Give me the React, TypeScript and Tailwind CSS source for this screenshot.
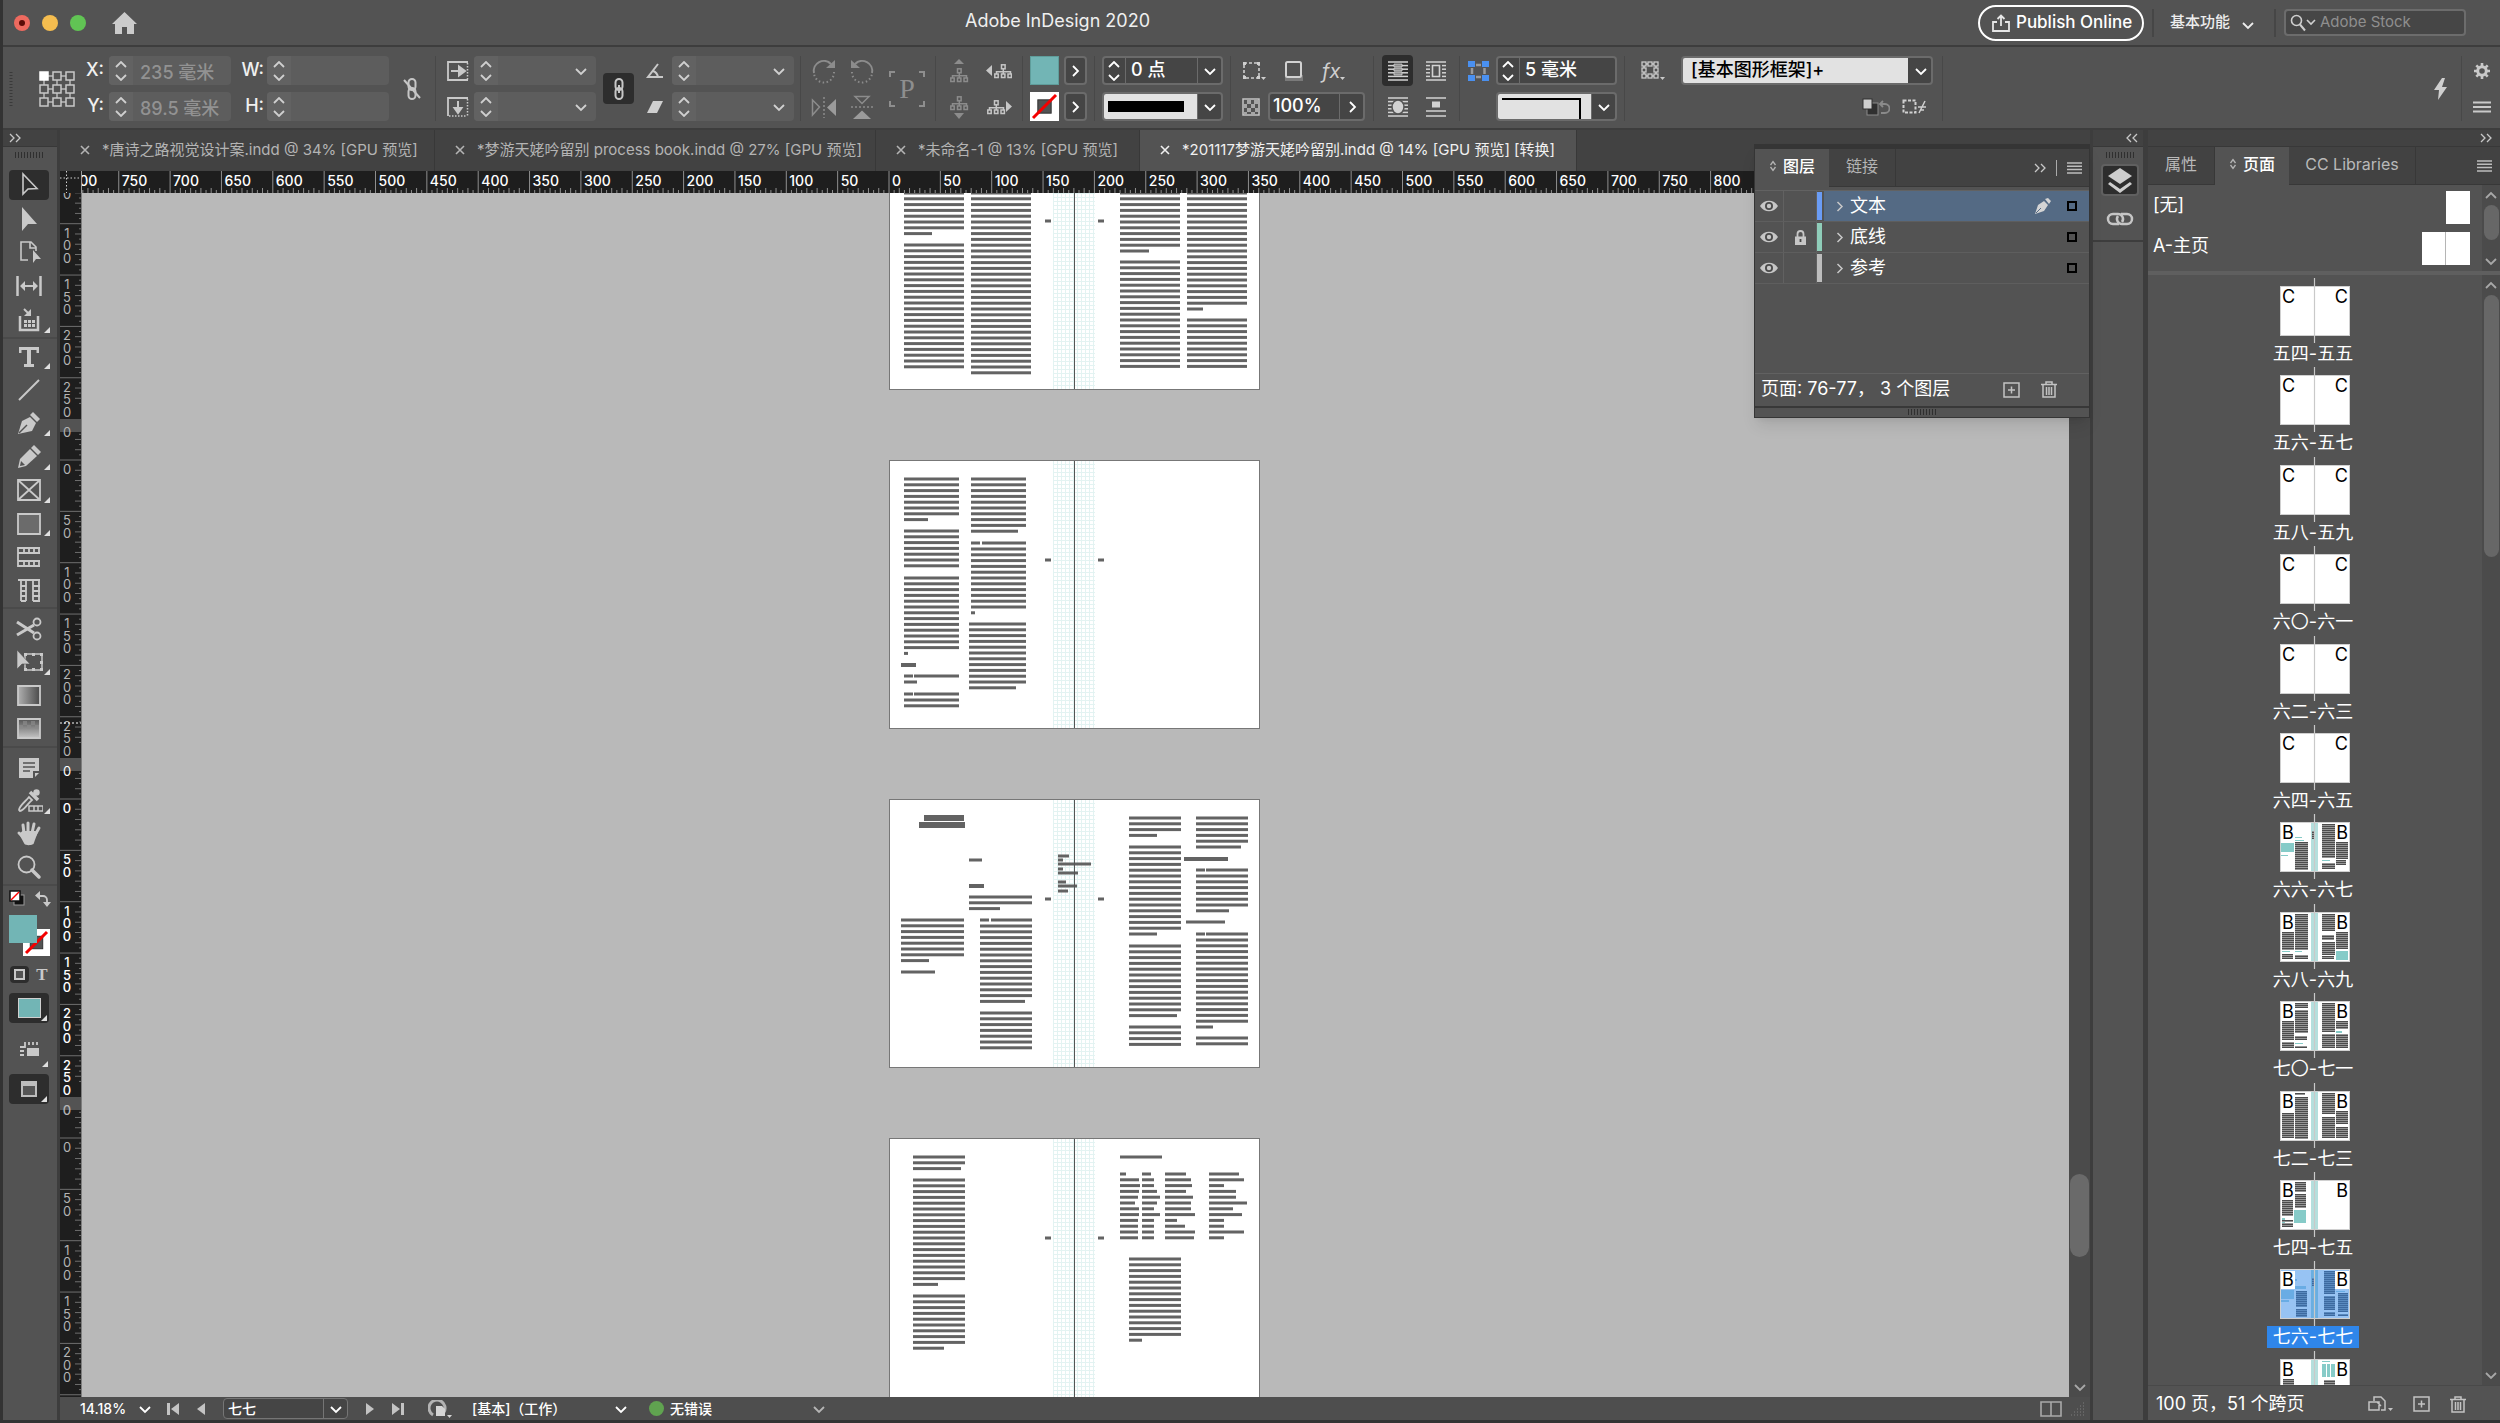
import React from "react";

type Kids = { children?: React.ReactNode };

/* ---------- small shared pieces ---------- */

function Svg({ w, h, className = "", children }: Kids & { w: number; h: number; className?: string }) {
  return (
    <svg width={w} height={h} viewBox={`0 0 ${w} ${h}`} fill="none" className={`shrink-0 ${className}`} aria-hidden="true">
      {children}
    </svg>
  );
}

function Chevron({ dir = "down", className = "" }: { dir?: "down" | "right" | "up"; className?: string }) {
  const d = dir === "down" ? "M1 4l5 5 5-5" : dir === "up" ? "M1 9l5-5 5 5" : "M4 1l5 5-5 5";
  return (
    <Svg w={12} h={12} className={className}>
      <path d={d} stroke="currentColor" strokeWidth="1.8" />
    </Svg>
  );
}

function Double({ dir }: { dir: "left" | "right" }) {
  return (
    <Svg w={12} h={10}>
      <path d={dir === "right" ? "M1 1l4 4-4 4M7 1l4 4-4 4" : "M5 1L1 5l4 4M11 1L7 5l4 4"} stroke="#c8c8c8" strokeWidth="1.3" />
    </Svg>
  );
}

function Grip() {
  return (
    <div className="flex justify-center gap-0.5">
      {Array.from({ length: 10 }, (_, i) => (
        <span key={i} className="h-1.5 w-px bg-[#2f2f2f]" />
      ))}
    </div>
  );
}

function Menu() {
  return (
    <Svg w={15} h={12}>
      <path d="M0 1h15M0 4.3h15M0 7.6h15M0 11h15" stroke="#bdbdbd" strokeWidth="1.5" />
    </Svg>
  );
}

function Stepper({ label, lit = false }: { label: string; lit?: boolean }) {
  return (
    <button aria-label={`${label} 增减`} className={lit ? "flex h-full w-[22px] shrink-0 items-center justify-center border-r border-[#6b6b6b] pr-0.5 text-white" : "flex h-full w-6 shrink-0 items-center justify-center rounded-l bg-[#626262] text-[#cfcfcf]"}>
      <Svg w={12} h={20}>
        <path d="M1 6l5-5 5 5M1 14l5 5 5-5" stroke="currentColor" strokeWidth="1.8" />
      </Svg>
    </button>
  );
}

function Field({ id, label, value = "", drop = false }: { id: string; label: string; value?: string; drop?: boolean }) {
  return (
    <div className="flex h-[29px] w-[122px] items-center rounded bg-[#5d5d5d]">
      <Stepper label={label} />
      <input id={id} aria-label={label} defaultValue={value} className="h-full min-w-0 flex-1 bg-transparent pl-[7px] text-[18px] text-[#929292] outline-none" />
      {drop && (
        <button aria-label={`${label} 选项`} className="flex w-[30px] justify-center text-[#d0d0d0]">
          <Chevron />
        </button>
      )}
    </div>
  );
}

function Divider() {
  return <div className="h-[65px] w-px shrink-0 bg-[#484848]" />;
}

function Rows({ className = "", children }: Kids & { className?: string }) {
  return <div className={`grid shrink-0 grid-rows-[29px_29px] items-center gap-y-[7px] ${className}`}>{children}</div>;
}

function IconButton({ label, className = "", children }: Kids & { label: string; className?: string }) {
  return (
    <button aria-label={label} className={`flex items-center justify-center ${className}`}>
      {children}
    </button>
  );
}

/* ---------- title bar ---------- */

function TitleBar() {
  return (
    <header className="flex h-[47px] shrink-0 items-center justify-between border-b-2 border-[#3d3d3d]">
      <div className="flex items-center">
        <span className="ml-[11px] flex size-4 items-center justify-center rounded-full bg-[#ee6a5f]">
          <span className="size-1.5 rounded-full bg-[#5c0d08]" />
        </span>
        <span className="ml-3 size-4 rounded-full bg-[#f5bd4f]" />
        <span className="ml-3 size-4 rounded-full bg-[#61c454]" />
        <IconButton label="主页" className="ml-[26px]">
          <Svg w={25} h={22}>
            <path d="M12.5 0L25 12h-3v10h-7v-7h-5v7H3V12H0z" fill="#cbcbcb" />
          </Svg>
        </IconButton>
      </div>
      <h1 className="pb-0.5 text-[18px] text-[#efefef]">Adobe InDesign 2020</h1>
      <div className="flex items-center justify-end pr-[34px]">
        <button className="flex h-9 w-[166px] items-center gap-1.5 rounded-full border-2 border-white pl-3 text-[17px] font-medium whitespace-nowrap text-white">
          <Svg w={18} h={18}>
            <path d="M5 8H1v9h16V8h-4M9 12V2M5.500 5L9 1.500 12.500 5" stroke="#e6e6e6" strokeWidth="1.8" />
          </Svg>
          Publish Online
        </button>
        <span className="ml-2 h-7 w-0.5 bg-[#464646]" />
        <button className="ml-4 flex items-center gap-3 text-[15px] font-medium text-[#ededed]">
          基本功能
          <Chevron className="mt-1" />
        </button>
        <span className="ml-5 h-7 w-0.5 bg-[#464646]" />
        <label className="ml-2 flex h-[27px] w-[182px] items-center rounded border-2 border-[#6c6c6c] bg-[#464646] pl-1">
          <Svg w={26} h={18}>
            <circle cx="6.500" cy="6.500" r="5" stroke="#cfcfcf" strokeWidth="1.6" />
            <path d="M10 10.500l5 6" stroke="#cfcfcf" strokeWidth="2" />
            <path d="M17 6l4 4 4-4" stroke="#cfcfcf" strokeWidth="1.6" />
          </Svg>
          <input aria-label="Adobe Stock" placeholder="Adobe Stock" className="ml-1 w-full min-w-0 bg-transparent text-[15px] outline-none placeholder:text-[#8f8f8f]" />
        </label>
      </div>
    </header>
  );
}

/* ---------- control bar ---------- */

function Rotate({ ccw = false }: { ccw?: boolean }) {
  return (
    <Svg w={26} h={26} className={ccw ? "-scale-x-100" : ""}>
      <path d="M3 15a10 10 0 0 1 17-9" stroke="#8c8c8c" strokeWidth="2" />
      <path d="M24 2v8h-9z" fill="#8c8c8c" />
      <path d="M23 14a10 10 0 0 1-20 1" stroke="#8c8c8c" strokeWidth="2" strokeDasharray="1.500 2.500" />
    </Svg>
  );
}

function Tree({ color }: { color: string }) {
  return (
    <g stroke={color} strokeWidth="1.5">
      <rect x="7.500" y=".8" width="3.600" height="4" />
      <path d="M9.300 5v5M2.500 10V7.700h14V10" />
      <rect x=".8" y="10" width="3.400" height="3.500" />
      <rect x="7.500" y="10" width="3.400" height="3.500" />
      <rect x="14" y="10" width="3.400" height="3.500" />
    </g>
  );
}

function Link({ broken = false }: { broken?: boolean }) {
  return (
    <Svg w={20} h={24}>
      <rect x="6.500" y="2" width="7" height="11" rx="3.500" stroke="#c6c6c6" strokeWidth="2" />
      <rect x="6.500" y="11" width="7" height="11" rx="3.500" stroke="#c6c6c6" strokeWidth="2" />
      {broken ? <path d="M2 3l16 18" stroke="#c6c6c6" strokeWidth="2" /> : <path d="M10 8v8" stroke="#c6c6c6" strokeWidth="2" />}
    </Svg>
  );
}

function NoneSwatch({ size }: { size: number }) {
  return (
    <Svg w={size} h={size}>
      <path d={`M0 0h${size}v${size}h-${size}z`} fill="#fff" />
      <rect x={size * 0.27} y={size * 0.27} width={size * 0.46} height={size * 0.46} fill="#535353" stroke="#333" />
      <path d={`M3 ${size - 3}L${size - 3} 3`} stroke="#f50000" strokeWidth="3" />
    </Svg>
  );
}

function Wrap({ kind }: { kind: "none" | "box" | "shape" | "jump" }) {
  const full = kind === "jump" ? [1, 14, 19] : [1, 4.6, 8.2, 11.8, 15.4, 19];
  return (
    <Svg w={20} h={20}>
      {full.map((y) => (
        <path key={y} d={`M0 ${y}h20`} stroke="#d2d2d2" strokeWidth="1.5" />
      ))}
      {kind === "none" && <path d="M6 3h8v3H6zM6 7h8v3H6zM6 11h8v3H6z" fill="#8d8d8d" stroke="#d2d2d2" strokeWidth=".8" />}
      {kind === "box" && <path d="M4 2h12v16H4z" fill="#535353" />}
      {kind === "box" && <path d="M6.500 4.500h7v11h-7z" stroke="#d2d2d2" strokeWidth="1.600" />}
      {kind === "shape" && <ellipse cx="10" cy="10" rx="6" ry="7" fill="#d2d2d2" stroke="#535353" strokeWidth="1.500" />}
      {kind === "jump" && <path d="M6 4.500h8v6H6z" fill="#d2d2d2" />}
    </Svg>
  );
}

function FrameIcon({ color = "#cfcfcf" }: { color?: string }) {
  return (
    <Svg w={24} h={20}>
      <path d="M2 2h15v15H2z" stroke={color} strokeWidth="1.600" strokeDasharray="3 2" />
      <path d="M1 1h3v3H1zM15 1h3v3h-3zM1 15h3v3H1zM15 15h3v3h-3z" fill={color} />
      <path d="M19 16h5l-2.500 3z" fill={color} />
    </Svg>
  );
}

function SquareArrow({ label }: { label: string }) {
  return (
    <IconButton label={label} className="h-[29px] w-[23px] rounded border-2 border-[#6b6b6b] bg-[#454545] pr-px text-white">
      <Chevron dir="right" />
    </IconButton>
  );
}

function ControlBar() {
  const box = "flex h-[29px] items-center overflow-hidden rounded border-2 border-[#6b6b6b] bg-[#454545]";
  const drop = "flex h-full w-6 shrink-0 items-center justify-center border-l border-[#6b6b6b] text-white";
  return (
    <section aria-label="控制" className="flex h-[83px] shrink-0 items-center border-b-2 border-[#3d3d3d] pt-0.5">
      <Svg w={4} h={34} className="ml-1.5">
        <path d="M2 0v34" stroke="#3a3a3a" strokeWidth="3" strokeDasharray="1 2" />
      </Svg>
      <IconButton label="参考点" className="ml-[26px]">
        <Svg w={36} h={36}>
          <path d="M4 5h27M4 18h27M4 31h27M5 4v27M18 4v27M31 4v27" stroke="#b9b9b9" strokeWidth="1.500" />
          {[1, 14, 27].map((y) =>
            [1, 14, 27].map((x) => <rect key={`${x}-${y}`} x={x} y={y} width="8" height="8" fill={x + y === 2 ? "#fff" : "#535353"} stroke={x + y === 2 ? "#fff" : "#c9c9c9"} strokeWidth="1.500" />)
          )}
        </Svg>
      </IconButton>
      <Rows className="ml-1 grid-cols-[25px_122px] gap-x-[5px] text-[18px] font-medium text-[#f0f0f0]">
        <label htmlFor="px" className="text-right">X:</label>
        <Field id="px" label="X" value="235 毫米" />
        <label htmlFor="py" className="text-right">Y:</label>
        <Field id="py" label="Y" value="89.5 毫米" />
      </Rows>
      <Rows className="ml-2 grid-cols-[25px_122px] gap-x-[3px] text-[18px] font-medium text-[#f0f0f0]">
        <label htmlFor="pw" className="text-right">W:</label>
        <Field id="pw" label="W" />
        <label htmlFor="ph" className="text-right">H:</label>
        <Field id="ph" label="H" />
      </Rows>
      <IconButton label="约束宽高" className="ml-3 w-[22px]">
        <Link broken />
      </IconButton>
      <div className="ml-3"><Divider /></div>
      <Rows className="ml-[11px] grid-cols-[22px_122px] gap-x-[5px]">
        <Svg w={22} h={20}>
          <path d="M21 1H1v18h20" stroke="#c9c9c9" strokeWidth="1.800" />
          <path d="M20.500 2v17M2 19h18" stroke="#c9c9c9" strokeWidth="1.500" strokeDasharray="1.500 1.500" />
          <path d="M4 10h8M12 5.500l6 4.500-6 4.500z" stroke="#c9c9c9" strokeWidth="2" fill="#c9c9c9" />
        </Svg>
        <Field id="sx" label="X 缩放" drop />
        <Svg w={22} h={20}>
          <path d="M21 1H1v18" stroke="#c9c9c9" strokeWidth="1.800" />
          <path d="M20.500 2v17M2 19h18" stroke="#c9c9c9" strokeWidth="1.500" strokeDasharray="1.500 1.500" />
          <path d="M11 4v8M7.500 11h7L11 16z" stroke="#c9c9c9" strokeWidth="2" fill="#c9c9c9" />
        </Svg>
        <Field id="sy" label="Y 缩放" drop />
      </Rows>
      <IconButton label="约束缩放比例" className="ml-[7px] h-[31px] w-[31px] rounded bg-[#2d2d2d]">
        <Link />
      </IconButton>
      <Rows className="ml-[11px] grid-cols-[22px_122px] gap-x-[5px]">
        <Svg w={22} h={16}>
          <path d="M13 1L3 14h15M8 8a8 8 0 0 1 5 6" stroke="#c9c9c9" strokeWidth="2" />
        </Svg>
        <Field id="rot" label="旋转角度" drop />
        <Svg w={22} h={16}>
          <path d="M8 2h10l-6 12H2z" fill="#cfcfcf" />
        </Svg>
        <Field id="shear" label="切变角度" drop />
      </Rows>
      <div className="ml-1.5"><Divider /></div>
      <Rows className="ml-2.5 grid-cols-[26px_26px] gap-x-3">
        <IconButton label="顺时针旋转"><Rotate /></IconButton>
        <IconButton label="逆时针旋转"><Rotate ccw /></IconButton>
        <IconButton label="水平翻转">
          <Svg w={26} h={22}>
            <path d="M1.500 4l7 7-7 8z" stroke="#8c8c8c" strokeWidth="1.500" />
            <path d="M25 3v17l-9-8.500z" fill="#9b9b9b" />
            <path d="M13 1v21" stroke="#8c8c8c" strokeWidth="1.500" strokeDasharray="2 2" />
          </Svg>
        </IconButton>
        <IconButton label="垂直翻转">
          <Svg w={26} h={24}>
            <path d="M6 1.500h14l-7 7z" stroke="#8c8c8c" strokeWidth="1.500" />
            <path d="M4 24h18l-9-8.500z" fill="#9b9b9b" />
            <path d="M2 12h22" stroke="#8c8c8c" strokeWidth="1.500" strokeDasharray="2 2" />
          </Svg>
        </IconButton>
      </Rows>
      <div className="relative ml-3.5 flex size-9 shrink-0 items-center justify-center">
        <Svg w={36} h={36} className="absolute inset-0">
          <path d="M1 6V1h5M30 1h5v5M35 30v5h-5M6 35H1v-5" stroke="#8e8e8e" strokeWidth="2" />
        </Svg>
        <span className="font-['Liberation_Serif'] text-[28px] leading-none text-[#8e8e8e]">P</span>
      </div>
      <div className="ml-2.5"><Divider /></div>
      <Rows className="ml-2.5 grid-cols-[26px_26px] gap-x-3.5">
        <IconButton label="选择容器">
          <Svg w={26} h={24}><path d="M8 5l5-5 5 5z" fill="#8c8c8c" /><g transform="translate(4 9)"><Tree color="#8c8c8c" /></g></Svg>
        </IconButton>
        <IconButton label="选择上一对象">
          <Svg w={26} h={16}><path d="M6 2v11L0 7.500z" fill="#c6c6c6" /><g transform="translate(8 1)"><Tree color="#c6c6c6" /></g></Svg>
        </IconButton>
        <IconButton label="选择内容">
          <Svg w={26} h={24}><path d="M8 18l5 6 5-6z" fill="#8c8c8c" /><g transform="translate(4 1)"><Tree color="#8c8c8c" /></g></Svg>
        </IconButton>
        <IconButton label="选择下一对象">
          <Svg w={26} h={16}><path d="M20 2v11l6-5.500z" fill="#c6c6c6" /><g transform="translate(1 1)"><Tree color="#c6c6c6" /></g></Svg>
        </IconButton>
      </Rows>
      <div className="ml-2.5"><Divider /></div>
      <Rows className="ml-[7px] grid-cols-[29px_23px] gap-x-[5px]">
        <button aria-label="填色" className="size-[29px] border border-[#5f9d9b] bg-[#72b5b5]" />
        <SquareArrow label="填色选项" />
        <button aria-label="描边" className="size-[29px]"><NoneSwatch size={29} /></button>
        <SquareArrow label="描边选项" />
      </Rows>
      <div className="ml-[7px]"><Divider /></div>
      <Rows className="ml-[7px] w-[121px]">
        <div className={box}>
          <Stepper label="描边粗细" lit />
          <input aria-label="描边粗细" defaultValue="0 点" className="min-w-0 flex-1 bg-transparent pl-[5px] text-[18px] font-medium text-white outline-none" />
          <button aria-label="描边粗细选项" className={drop}><Chevron /></button>
        </div>
        <div className={box}>
          <div className="flex h-full flex-1 items-center bg-[#e2e2e2] px-1"><span className="h-[11px] w-[76px] bg-black" /></div>
          <button aria-label="描边类型" className={drop}><Chevron /></button>
        </div>
      </Rows>
      <div className="ml-[7px]"><Divider /></div>
      <Rows className="ml-[11px] w-[123px]">
        <div className="flex items-center gap-4">
          <IconButton label="角选项"><FrameIcon /></IconButton>
          <IconButton label="投影">
            <Svg w={24} h={20}>
              <path d="M3 14h18v6H3z" fill="#7a7a7a" />
              <rect x="4" y="1" width="15" height="15" rx="1.500" fill="#535353" stroke="#d2d2d2" strokeWidth="2" />
            </Svg>
          </IconButton>
          <button aria-label="效果" className="flex items-end text-[20px] leading-none italic text-[#cfcfcf]">
            fx
            <Svg w={5} h={4}><path d="M0 0h5L2.500 3z" fill="#cfcfcf" /></Svg>
          </button>
        </div>
        <div className="flex items-center gap-2">
          <Svg w={18} h={18}>
            <path d="M1 1h16v16H1z" stroke="#c3c3c3" strokeWidth="1.500" />
            <path d="M5 2h4v4H5zM12 2h4v4h-4zM2 6h3v4H2zM9 6h4v4H9zM5 10h4v4H5zM13 10h3v4h-3zM2 14h3v2H2zM9 14h4v2H9z" fill="#a5a5a5" />
          </Svg>
          <div className={`${box} w-[97px]`}>
            <input aria-label="不透明度" defaultValue="100%" className="min-w-0 flex-1 bg-transparent pl-[3px] text-[18px] font-medium text-white outline-none" />
            <button aria-label="不透明度选项" className={drop}><Chevron dir="right" /></button>
          </div>
        </div>
      </Rows>
      <div className="ml-2"><Divider /></div>
      <Rows className="ml-2 grid-cols-[31px_31px] gap-x-[7px]">
        <IconButton label="无文本绕排" className="h-[31px] rounded bg-[#2d2d2d]"><Wrap kind="none" /></IconButton>
        <IconButton label="沿定界框绕排"><Wrap kind="box" /></IconButton>
        <IconButton label="沿对象形状绕排"><Wrap kind="shape" /></IconButton>
        <IconButton label="上下型绕排"><Wrap kind="jump" /></IconButton>
      </Rows>
      <div className="ml-2"><Divider /></div>
      <Rows className="ml-2 grid-cols-[21px_121px] gap-x-[7px]">
        <Svg w={21} h={20}>
          <path d="M4 7v6M16.500 7v6M8 4h5M8 16h5" stroke="#9a9a9a" strokeWidth="2.500" />
          <path d="M0 0h7v6H0zM14 0h7v6h-7zM0 14h7v6H0zM14 14h7v6h-7z" fill="#4a90ef" />
        </Svg>
        <div className={box}>
          <Stepper label="角大小" lit />
          <input aria-label="角大小" defaultValue="5 毫米" className="min-w-0 flex-1 bg-transparent pl-[5px] text-[18px] font-medium text-white outline-none" />
        </div>
        <span />
        <div className={box}>
          <div className="flex h-full flex-1 items-end bg-[#e2e2e2] pr-2.5 pl-1"><span className="h-[21px] w-full border-t-2 border-r-2 border-black" /></div>
          <button aria-label="角形状" className={drop}><Chevron /></button>
        </div>
      </Rows>
      <div className="ml-[7px]"><Divider /></div>
      <Rows className="ml-4 grid-cols-[24px_252px] gap-x-4">
        <Svg w={24} h={20}>
          <path d="M3 3h12v12H3z" stroke="#c9c9c9" strokeWidth="1.500" />
          {[1, 7, 13].map((y) => [1, 7, 13].map((x) => (x === 7 && y === 7 ? null : <rect key={`${x}${y}`} x={x} y={y} width="4" height="4" fill="#535353" stroke="#c9c9c9" strokeWidth="1.300" />)))}
          <path d="M19 16h5l-2.500 3z" fill="#c9c9c9" />
        </Svg>
        <div className="relative h-[29px]">
          <select aria-label="对象样式" className="h-full w-full appearance-none rounded border-2 border-[#6b6b6b] bg-[linear-gradient(90deg,#e2e2e2_225px,#454545_225px)] pl-2 text-[18px] font-medium text-black">
            <option>[基本图形框架]+</option>
          </select>
          <span className="pointer-events-none absolute inset-y-0 right-1.5 flex items-center text-white"><Chevron /></span>
        </div>
        <span />
        <div className="flex justify-end gap-3 pr-1.5">
          <IconButton label="清除覆盖">
            <Svg w={28} h={18}>
              <rect x="5" y="5" width="11" height="12" fill="#303030" stroke="#8a8a8a" />
              <rect x="1" y="1" width="9" height="10" fill="#cfcfcf" stroke="#303030" />
              <path d="M18 6h5a4 4 0 0 1 0 9h-4M21 3l-3 3 3 3" stroke="#8a8a8a" strokeWidth="1.800" />
            </Svg>
          </IconButton>
          <IconButton label="清除未定义属性">
            <Svg w={25} h={16}>
              <rect x="1.500" y="1.500" width="12" height="12" stroke="#d0d0d0" strokeWidth="2" strokeDasharray="3 1.500" />
              <path d="M23 2l-6 12M16 8h8M18 11h4" stroke="#d0d0d0" strokeWidth="1.500" />
            </Svg>
          </IconButton>
        </div>
      </Rows>
      <div className="ml-[9px]"><Divider /></div>
      <div className="flex-1" />
      <IconButton label="快速应用">
        <Svg w={16} h={22}>
          <path d="M9 0L1 12h5L5 22l9-13H9l3-9z" fill="#cfcfcf" />
        </Svg>
      </IconButton>
      <div className="ml-3"><Divider /></div>
      <Rows className="mr-1.5 ml-2 w-6 justify-items-center">
        <IconButton label="设置">
          <Svg w={16} h={16}>
            <circle cx="8" cy="8" r="4.300" stroke="#c9c9c9" strokeWidth="3" />
            <path d="M8 0v3M8 13v3M0 8h3M13 8h3M2.300 2.300l2 2M11.700 11.700l2 2M2.300 13.700l2-2M11.700 4.300l2-2" stroke="#c9c9c9" strokeWidth="2.600" />
          </Svg>
        </IconButton>
        <IconButton label="面板菜单">
          <Svg w={18} h={12}><path d="M0 1.500h18M0 6h18M0 10.500h18" stroke="#c9c9c9" strokeWidth="2" /></Svg>
        </IconButton>
      </Rows>
    </section>
  );
}

/* ---------- tool strip ---------- */

const C = "#c9c9c9";

const toolGroups: { height: string; tools: { name: string; flag?: boolean; active?: boolean; icon: React.ReactNode }[] }[] = [
  {
    height: "h-[169px]",
    tools: [
      { name: "选择工具", active: true, icon: <path d="M7 2v20l5-5 9-.5z" stroke={C} strokeWidth="1.600" /> },
      { name: "直接选择工具", icon: <path d="M6 1v24l6-7h9z" fill={C} /> },
      { name: "页面工具", icon: <><path d="M12 21H5V3h10l5 5v4M14 3v6h6" stroke={C} strokeWidth="1.600" /><path d="M17 11v13l3-4h5z" fill={C} /></> },
      { name: "间隙工具", icon: <><path d="M1.500 3v20M24.500 3v20" stroke={C} strokeWidth="2.500" /><path d="M6 13h14" stroke={C} strokeWidth="2" /><path d="M9 8v10l-5-5zM17 8v10l5-5z" fill={C} /></> },
      { name: "内容收集器工具", flag: true, icon: <><path d="M4 9v14h18V9" stroke={C} strokeWidth="2.500" /><path d="M8 13h3v3H8zM12 13h3v3h-3zM16 13h3v3h-3zM8 17h3v3H8zM12 17h3v3h-3zM16 17h3v3h-3z" fill={C} /><path d="M8 2l4 4" stroke={C} strokeWidth="2" /><path d="M15 2v7H8z" fill={C} /></> },
    ],
  },
  {
    height: "h-[267px] pt-px",
    tools: [
      { name: "文字工具", flag: true, icon: <path d="M3 3h20v6h-2.500V6H15v14h3v3H8v-3h3V6H5.500v3H3z" fill={C} /> },
      { name: "直线工具", icon: <path d="M3 23L23 3" stroke={C} strokeWidth="2" /> },
      { name: "钢笔工具", flag: true, icon: <><path d="M2 24L6 11l8-4 6 6-4 8z" fill={C} /><path d="M3 23l8-8" stroke="#535353" strokeWidth="1.500" /><path d="M17 2l7 7-3 3-7-7z" fill={C} /></> },
      { name: "铅笔工具", flag: true, icon: <><path d="M2 24l2-9L14 5l7 7-11 10z" fill={C} /><path d="M4 22l1-5 4 4z" fill="#535353" /><path d="M18 1l7 7-3 3-7-7z" fill={C} /></> },
      { name: "矩形框架工具", flag: true, icon: <path d="M2 3h22v20H2zM2 3l22 20M24 3L2 23" stroke={C} strokeWidth="1.800" /> },
      { name: "矩形工具", flag: true, icon: <path d="M2 3h22v20H2z" fill="#6b6b6b" stroke={C} strokeWidth="1.800" /> },
      { name: "水平网格工具", icon: <path d="M24 4H2v18h22M2 9h22M2 17h22M8 4v5M13 4v5M18 4v5M23 4v5M8 17v5M13 17v5M18 17v5M23 17v5" stroke={C} strokeWidth="1.800" /> },
      { name: "垂直网格工具", icon: <path d="M2 3h22M5 3v21M10 3v21M17 3v21M23 3v21M5 9h5M5 14h5M5 19h5M5 24h5M17 9h7M17 14h7M17 19h7M17 24h7" stroke={C} strokeWidth="1.800" /> },
    ],
  },
  {
    height: "h-[134px] pt-[3px]",
    tools: [
      { name: "剪刀工具", icon: <><path d="M1 6l17 11M1 19L18 9" stroke={C} strokeWidth="3" /><circle cx="21" cy="6" r="3.500" stroke={C} strokeWidth="1.800" /><circle cx="21" cy="20" r="3.500" stroke={C} strokeWidth="1.800" /></> },
      { name: "自由变换工具", flag: true, icon: <><path d="M9 5h17v16H9z" stroke={C} strokeWidth="1.500" /><path d="M8 4h3v3H8zM16 4h3v3h-3zM24 4h3v3h-3zM24 12h3v3h-3zM8 19h3v3H8zM16 19h3v3h-3zM24 19h3v3h-3z" fill={C} /><path d="M1 1v19l5-5h8z" fill={C} stroke="#535353" strokeWidth=".6" /></> },
      { name: "渐变色板工具", icon: <path d="M2 3h22v19H2z" fill="url(#gradH)" stroke={C} strokeWidth="1.800" /> },
      { name: "渐变羽化工具", icon: <><path d="M2 3h22v19H2z" fill="url(#gradV)" stroke={C} strokeWidth="1.800" /><path d="M7 5h4v4H7zM15 5h4v4h-4zM3 9h4v4H3zM11 9h4v4h-4zM19 9h4v4h-4z" fill="#8a8a8a" fillOpacity=".7" /></> },
    ],
  },
  {
    height: "h-[133px] pt-[3px]",
    tools: [
      { name: "附注工具", icon: <><path d="M3 3h20v13h-6v7H3z" fill={C} /><path d="M19 18h4l-4 4z" fill={C} /><path d="M7 8h12M7 12h12M7 16h7" stroke="#535353" strokeWidth="1.500" /></> },
      { name: "颜色主题工具", flag: true, icon: <><path d="M3 22c0-4 7-9 10-13l3 3c-4 3-8 11-12 11z" stroke={C} strokeWidth="1.800" /><path d="M14 4l8 8M17 8l4-5" stroke={C} strokeWidth="3.500" /><circle cx="20.500" cy="4.500" r="3.200" fill={C} /><path d="M13 18h14v5H13zM18 18v5M22 18v5" stroke={C} strokeWidth="1.500" /></> },
      { name: "抓手工具", icon: <><path d="M8 12l-1-8M12 12V2M16 12l2-9M19 14l4-7M7 16l-4-4" stroke={C} strokeWidth="3" strokeLinecap="round" /><path d="M6.500 10h13l2 2-4 11c-4 2-8 1-9 0L3 13z" fill={C} /></> },
      { name: "缩放工具", icon: <><circle cx="10.500" cy="10.500" r="8" stroke={C} strokeWidth="1.800" /><path d="M16 16l7 7" stroke={C} strokeWidth="3.500" strokeLinecap="round" /></> },
    ],
  },
];

function Flag() {
  return (
    <Svg w={6} h={6} className="absolute right-[7px] bottom-1">
      <path d="M6 0v6H0z" fill="#e0e0e0" />
    </Svg>
  );
}

function ToolStrip() {
  return (
    <aside aria-label="工具" className="flex w-[57px] shrink-0 flex-col border-r-[3px] border-[#3d3d3d]">
      <svg width="0" height="0" className="absolute" aria-hidden="true">
        <defs>
          <linearGradient id="gradH"><stop stopColor="#b0b0b0" /><stop offset="1" stopColor="#4a4a4a" /></linearGradient>
          <linearGradient id="gradV" x2="0" y2="1"><stop stopColor="#555" /><stop offset="1" stopColor="#c4c4c4" /></linearGradient>
        </defs>
      </svg>
      <div className="flex h-[17px] items-center border-b border-[#383838] bg-[#424242] pl-1.5"><Double dir="right" /></div>
      <div className="pt-[5px] pr-0.5 pb-2.5"><Grip /></div>
      {toolGroups.map((g, i) => (
        <div key={i} className={`box-content flex flex-col border-b-2 border-[#4a4a4a] ${g.height}`}>
          {g.tools.map((t) => (
            <button key={t.name} aria-label={t.name} aria-pressed={!!t.active} className="relative flex flex-1 items-center justify-center pr-0.5">
              <span className={t.active ? "flex h-[30px] w-10 items-center justify-center rounded bg-[#2d2d2d]" : "flex h-[30px] w-10 items-center justify-center"}>
                <Svg w={27} h={26}>{t.icon}</Svg>
              </span>
              {t.flag && <Flag />}
            </button>
          ))}
        </div>
      ))}
      <div className="flex justify-between px-[6px] pt-1">
        <IconButton label="默认填色和描边">
          <Svg w={17} h={17}>
            <rect x="5" y="5" width="10" height="10" fill="#111" stroke="#9a9a9a" />
            <rect x="1" y="1" width="10" height="10" fill="#fff" stroke="#111" strokeWidth="1.500" />
            <path d="M2 10l8-8" stroke="#f00" strokeWidth="1.500" />
          </Svg>
        </IconButton>
        <IconButton label="互换填色和描边">
          <Svg w={16} h={16}>
            <path d="M3 5h5a4 4 0 0 1 4 4v4" stroke={C} strokeWidth="1.800" />
            <path d="M5 0v9L0 4.500zM8 11h8l-4 5z" fill={C} />
          </Svg>
        </IconButton>
      </div>
      <div className="relative mt-2 ml-1.5 h-[41px] w-[41px]">
        <button aria-label="描边" className="absolute right-0 bottom-0 size-[27px]"><NoneSwatch size={27} /></button>
        <button aria-label="填色" className="absolute top-0 left-0 size-7 bg-[#72b5b5]" />
      </div>
      <div className="mt-2.5 flex items-center gap-1 pl-[7px]">
        <IconButton label="格式针对容器" className="h-[17px] w-[19px] rounded-sm bg-[#2d2d2d]">
          <span className="size-[11px] border-2 border-[#c9c9c9] bg-[#535353]" />
        </IconButton>
        <button aria-label="格式针对文本" className="w-[18px] font-['Liberation_Serif'] text-[17px] leading-none font-bold text-[#c9c9c9]">T</button>
      </div>
      <button aria-label="应用颜色" className="relative mx-[6px] mt-2.5 flex h-[30px] w-10 items-center justify-center rounded bg-[#2d2d2d]">
        <span className="h-5 w-[23px] border border-[#d0d0d0] bg-[#72b5b5]" />
        <Svg w={6} h={6} className="absolute right-0.5 bottom-0.5"><path d="M6 0v6H0z" fill="#e0e0e0" /></Svg>
      </button>
      <button aria-label="视图选项" className="relative mt-3 flex h-[30px] w-full items-center justify-center">
        <Svg w={20} h={16}>
          <path d="M7 6h12v8H7z" fill={C} />
          <path d="M0 5h5V0M9 0v3M13 0v3M17 0v3M0 9h4M0 13h4" stroke={C} strokeWidth="1.800" />
        </Svg>
        <Svg w={6} h={6} className="absolute right-[9px] bottom-[-2px]"><path d="M6 0v6H0z" fill="#e0e0e0" /></Svg>
      </button>
      <button aria-label="屏幕模式" className="relative mx-[6px] mt-[9px] flex h-[30px] w-10 items-center justify-center rounded bg-[#2d2d2d]">
        <span className="h-4 w-4 border-2 border-t-[5px] border-[#bdbdbd] bg-[#555]" />
        <Svg w={6} h={6} className="absolute right-0.5 bottom-0.5"><path d="M6 0v6H0z" fill="#e0e0e0" /></Svg>
      </button>
    </aside>
  );
}

/* ---------- document tabs and rulers ---------- */

const docs = [
  { name: "*唐诗之路视觉设计案.indd @ 34% [GPU 预览]", w: "w-[375px]" },
  { name: "*梦游天姥吟留别 process book.indd @ 27% [GPU 预览]", w: "w-[441px]" },
  { name: "*未命名-1 @ 13% [GPU 预览]", w: "w-[264px]" },
  { name: "*201117梦游天姥吟留别.indd @ 14% [GPU 预览] [转换]", w: "w-[437px]", on: true },
];

function DocTabs() {
  return (
    <div role="tablist" aria-label="文档" className="flex h-[41px] shrink-0 bg-[#424242]">
      {docs.map((d) => (
        <div key={d.name} className={`flex shrink-0 items-center gap-3 border-r border-[#383838] pr-3 pb-px pl-5 whitespace-nowrap ${d.w} ${d.on ? "bg-[#535353] text-[#f0f0f0]" : "text-[#b4b4b4]"}`}>
          <button aria-label="关闭"><Svg w={10} h={10}><path d="M1 1l8 8M9 1L1 9" stroke="currentColor" strokeWidth="1.600" /></Svg></button>
          <button role="tab" aria-selected={!!d.on} className="text-[15px]">{d.name}</button>
        </div>
      ))}
    </div>
  );
}

const UNIT = 51.35;

function TopRuler() {
  const labels = Array.from({ length: 39 }, (_, i) => i - 16);
  return (
    <div className="flex h-[22px] shrink-0 bg-[#1e1e1e]">
      <Svg w={22} h={22}>
        <path d="M0 7h22M6.500 0v22" stroke="#d0d0d0" strokeDasharray="1.500 2" />
        <path d="M21.500 0v22" stroke="#9a9a9a" />
      </Svg>
      <svg className="h-full min-w-0 flex-1" aria-label="水平标尺">
        {labels.map((n) => {
          const x = 807 + n * UNIT;
          return (
            <g key={n}>
              <path d={`M${x} 0v22`} stroke="#8f8f8f" />
              {Array.from({ length: 9 }, (_, k) => (
                <path key={k} d={`M${x + ((k + 1) * UNIT) / 10} ${k % 2 ? 17 : 19}V22`} stroke="#8f8f8f" />
              ))}
              <text x={x + 3} y="15" fontSize="14" fontWeight="500" fill="#fff">{Math.abs(n * 50)}</text>
            </g>
          );
        })}
      </svg>
    </div>
  );
}

function SideRuler() {
  return (
    <svg className="h-full w-[22px] shrink-0 border-r border-[#7d7d7d] bg-[#1e1e1e]" aria-label="垂直标尺">
      {[0, 1, 2, 3].map((s) => {
        const top = s * 339 - 72;
        const on = s === 2;
        return (
          <g key={s} fill={on ? "#fff" : "#b4b4b4"} fontSize="13" fontWeight={on ? 500 : 400} textAnchor="middle">
            {Array.from({ length: 61 }, (_, k) => k - 5).map((k) => {
              const y = top + (k * UNIT) / 10;
              return <path key={k} d={`M${k % 10 === 0 ? 0 : k % 2 ? 19 : 15} ${y}H22`} stroke="#6f6f6f" />;
            })}
            <path d={`M0 ${top + 298}h22v13H0z`} fill="#535353" />
            {[0, 50, 100, 150, 200, 250].map((v) =>
              String(v).split("").map((c, j) => (
                <text key={`${v}${j}`} x="7" y={Math.round(top + (v / 50) * UNIT + 14 + j * 12.5)}>{c}</text>
              ))
            )}
            {s < 3 && <text x="7" y={top + 316} fill={s === 1 ? "#fff" : "#b4b4b4"}>0</text>}
          </g>
        );
      })}
      <path d="M0 530h22" stroke="#fff" strokeDasharray="2 2" />
    </svg>
  );
}

/* ---------- spreads: greeked text, one entry per block of lines ---------- */

// x, y, line width, line count, width of last short line, line height
type Block = [number, number, number, number, number?, number?];

const marks: Block[] = [[156, 100, 6, 1], [209, 100, 6, 1]];

const spreads: Block[][] = [
  [
    [15, 72, 60, 7, 28], [15, 124, 60, 22],
    [82, 72, 60, 32],
    [231, 72, 60, 10, 29], [231, 141, 60, 19],
    [298, 72, 60, 20, 16], [298, 199, 60, 9],
  ],
  [
    [15, 19, 55, 7, 24], [15, 71, 55, 7], [15, 118, 55, 13, 4], [12, 205, 15, 1, 0, 4],
    [15, 216, 9, 1], [25, 216, 45, 1], [15, 222, 13, 1], [15, 234, 9, 1], [25, 234, 45, 1], [15, 240, 55, 2],
    [82, 19, 55, 9, 47], [82, 83, 9, 1], [93, 83, 44, 1], [82, 89, 55, 11, 4], [80, 164, 57, 11, 47],
  ],
  [
    [35, 19, 40, 1, 0, 6], [30, 26, 46, 1, 0, 6],
    [80, 61, 13, 1], [80, 87, 15, 1, 0, 4], [80, 98, 63, 2, 31],
    [12, 121, 63, 7, 28], [12, 173, 34, 1],
    [91, 121, 9, 1], [102, 121, 41, 1], [91, 127, 52, 13, 45], [91, 214, 52, 7],
    [169, 57, 11, 1], [169, 61, 5, 1], [169, 65, 33, 1], [169, 70, 5, 1], [169, 74, 20, 1], [169, 83, 8, 1], [169, 87, 19, 1], [169, 92, 10, 1],
    [240, 19, 52, 3, 28], [240, 48, 52, 15, 28], [240, 147, 52, 12, 48], [240, 228, 52, 4],
    [307, 19, 52, 5, 45], [295, 60, 44, 1, 0, 4], [307, 71, 9, 1], [317, 71, 42, 1], [307, 77, 52, 6, 33],
    [297, 123, 39, 1], [307, 135, 9, 1], [317, 135, 42, 1], [307, 141, 52, 15, 17], [307, 239, 52, 2],
  ],
  [
    [24, 19, 52, 2, 48], [24, 42, 52, 18, 25], [24, 158, 52, 9, 31],
    [231, 19, 42, 1], [240, 121, 52, 14, 13],
  ],
];

const table: [number, number[]][] = [
  [231, [6, 19, 20, 19, 18, 15, 19, 19, 18, 18, 18, 18]],
  [253, [9, 12, 12, 15, 18, 15, 12, 18, 12, 12, 12, 12]],
  [276, [21, 26, 27, 21, 28, 26, 26, 30, 12, 20, 30, 29]],
  [320, [30, 35, 15, 27, 27, 38, 24, 33, 15, 15, 35, 15]],
];

const PITCH = 5.8;

function Spread({ index }: { index: number }) {
  const blocks = [...spreads[index], ...marks];
  return (
    <svg width="371" height="269" viewBox="0 0 371 269" className="shrink-0 bg-white" aria-label={`跨页 ${index + 1}`}>
      <defs>
        <pattern id={`grid${index}`} width="4" height="4" patternUnits="userSpaceOnUse">
          <path d="M0 .5h4M.5 0v4" stroke="#e3f3f2" />
        </pattern>
      </defs>
      <rect x="164" y="0" width="42" height="269" fill={`url(#grid${index})`} />
      {blocks.map(([x, y, w, n, tail, h = 3], b) => (
        <g key={b} fill="#636363">
          {Array.from({ length: n }, (_, i) => (
            <rect key={i} x={x} y={y + i * PITCH - h / 2} width={w} height={h} />
          ))}
          {tail ? <rect x={x} y={y + n * PITCH - h / 2} width={tail} height={h} /> : null}
        </g>
      ))}
      {index === 3 &&
        table.map(([x, ws]) => ws.map((w, i) => <rect key={`${x}-${i}`} x={x} y={34.5 + i * PITCH} width={w} height="3" fill="#636363" />))}
      <path d="M185.500 0v269" stroke="#555" />
      <rect x=".5" y=".5" width="370" height="268" stroke="#777" fill="none" />
    </svg>
  );
}

function StatusBar() {
  return (
    <footer className="flex h-[23px] shrink-0 items-center bg-[#4e4e4e] text-[14px] font-medium text-white">
      <button aria-label="缩放级别" className="flex w-[91px] items-center justify-between pl-5">14.18%<Chevron /></button>
      <IconButton label="第一页" className="ml-4"><Svg w={12} h={12}><path d="M0 0h3v12H0zM12 0v12L4 6z" fill="#c3c3c3" /></Svg></IconButton>
      <IconButton label="上一页" className="ml-[18px]"><Svg w={8} h={12}><path d="M8 0v12L0 6z" fill="#c3c3c3" /></Svg></IconButton>
      <div className="ml-[18px] flex h-[21px] w-[125px] items-center rounded-sm border border-[#757575] bg-[#454545]">
        <input aria-label="页码" defaultValue="七七" className="min-w-0 flex-1 bg-transparent pl-1 text-[14px] text-white outline-none" />
        <button aria-label="页码列表" className="flex h-full w-6 items-center justify-center border-l border-[#757575]"><Chevron /></button>
      </div>
      <IconButton label="下一页" className="ml-[18px]"><Svg w={8} h={12}><path d="M0 0v12l8-6z" fill="#c3c3c3" /></Svg></IconButton>
      <IconButton label="最后一页" className="ml-[18px]"><Svg w={12} h={12}><path d="M0 0v12l8-6zM9 0h3v12H9z" fill="#c3c3c3" /></Svg></IconButton>
      <IconButton label="打开" className="ml-6">
        <Svg w={24} h={18}>
          <path d="M5 15A8 8 0 1 1 16 12" stroke="#b3b3b3" strokeWidth="3" />
          <path d="M8 6h6l3 3v7H8z" fill="#d5d5d5" />
          <path d="M19 15h5l-2.500 3z" fill="#d5d5d5" />
        </Svg>
      </IconButton>
      <button className="ml-5 flex w-[155px] items-center justify-between">[基本]（工作）<Chevron /></button>
      <button className="ml-[22px] flex w-[176px] items-center">
        <span className="mr-1.5 size-[15px] rounded-full bg-[#60a350]" />
        无错误
        <Chevron className="ml-auto text-[#b5b5b5]" />
      </button>
      <div className="flex-1" />
      <IconButton label="拆分版面视图" className="mr-2"><Svg w={22} h={16}><path d="M1 1h20v14H1zM11 1v14" stroke="#a9a9a9" strokeWidth="1.600" /></Svg></IconButton>
      <Svg w={14} h={14} className="mr-1.5">
        <path d="M1 13h13M4 10h10M7 7h7M10 4h4M13 1h1" stroke="#7c7c7c" strokeDasharray="1 2" />
      </Svg>
    </footer>
  );
}

/* ---------- floating layers panel ---------- */

const layers = [
  { name: "文本", bar: "bg-[#6a9cf5]", on: true },
  { name: "底线", bar: "bg-[#8fcdb9]", lock: true },
  { name: "参考", bar: "bg-[#bdbdbd]" },
];

function SortMark() {
  return <Svg w={8} h={12}><path d="M1.500 5L4 1.500 6.500 5M1.500 7L4 10.500 6.500 7" stroke="#b5b5b5" strokeWidth="1.300" /></Svg>;
}

function NewIcon() {
  return <Svg w={17} h={16}><path d="M1 1h15v14H1zM8.500 4.500v7M5 8h7" stroke="#c3c3c3" strokeWidth="1.500" /></Svg>;
}

function TrashIcon() {
  return <Svg w={16} h={17}><path d="M0 3.500h16M5 3.500V1h6v2.500M2 4v12h12V4M5.500 6v8M8 6v8M10.500 6v8" stroke="#c3c3c3" strokeWidth="1.500" /></Svg>;
}

function LayersPanel() {
  return (
    <section aria-label="图层" className="absolute top-3.5 right-0 flex h-[274px] w-[336px] flex-col border border-t-[5px] border-[#353535] bg-[#535353] shadow-lg">
      <div role="tablist" className="flex h-[38px] bg-[#424242] text-[16px]">
        <button role="tab" aria-selected className="flex w-[74px] items-center justify-center gap-1.5 bg-[#535353] pb-1 font-medium text-white"><SortMark />图层</button>
        <button role="tab" className="w-[67px] border-r border-b border-[#383838] pb-1 text-[#b4b4b4]">链接</button>
        <div className="flex flex-1 items-center justify-end gap-2.5 border-b border-[#383838] pr-[7px]">
          <Double dir="right" />
          <span className="h-4 w-px bg-[#aaa]" />
          <Menu />
        </div>
      </div>
      <ul className="mt-[3px] border-t border-[#626262]">
        {layers.map((l) => (
          <li key={l.name} className="flex h-[31px] items-stretch border-b border-[#5e5e5e] text-[18px] text-white">
            <button aria-label="切换可视性" className="flex w-[29px] items-center justify-center border-r border-[#616161]">
              <Svg w={18} h={12}>
                <path d="M0 6c4-7 14-7 18 0-4 7-14 7-18 0z" fill="#c6c6c6" />
                <circle cx="9" cy="6" r="4" fill="#4a4a4a" />
                <circle cx="9" cy="6" r="2.200" fill="#c6c6c6" />
              </Svg>
            </button>
            <button aria-label="切换锁定" className="flex w-[33px] items-center justify-center border-r border-[#616161]">
              {l.lock && <Svg w={13} h={15}><path d="M3.500 7V4a3 3 0 0 1 6 0v3" stroke="#c6c6c6" strokeWidth="1.800" /><path d="M1 6.500h11V15H1z" fill="#c6c6c6" /><path d="M6.500 9v3" stroke="#444" strokeWidth="1.800" /></Svg>}
            </button>
            <span className={`my-px mr-0.5 w-[5px] ${l.bar}`} />
            <div className={`flex flex-1 items-center pr-3 pl-3 ${l.on ? "bg-[#546a84]" : ""}`}>
              <Svg w={8} h={11}><path d="M1.500 1l4.500 4.500L1.500 10" stroke="#c8c8c8" strokeWidth="1.500" /></Svg>
              <span className="ml-1.5">{l.name}</span>
              {l.on && (
                <Svg w={16} h={16} className="ml-auto"><path d="M0 16L3 7l6-4 4 4-4 6zM10 1l3-1 3 3-2 3z" fill="#d4d4d4" /><path d="M1 15l5-5" stroke="#546a84" /></Svg>
              )}
              <span className={`size-2.5 border-2 border-black ${l.on ? "ml-4" : "ml-auto"}`} />
            </div>
          </li>
        ))}
      </ul>
      <div className="mt-auto flex h-[33px] items-center border-t border-[#616161] pr-8 pb-px pl-1.5 text-[18px] text-white">
        <span className="flex-1">页面: 76-77， 3 个图层</span>
        <IconButton label="新建图层"><NewIcon /></IconButton>
        <IconButton label="删除图层" className="ml-[21px]"><TrashIcon /></IconButton>
      </div>
      <div className="border-t-2 border-[#383838] pt-px pb-0.5"><Grip /></div>
    </section>
  );
}

/* ---------- pages panel ---------- */

// x, y, width, height, accent flag
type Mini = [number, number, number, number, boolean?];

const pages: { label: string; master: string; on?: boolean; art?: Mini[] }[] = [
  { label: "五四-五五", master: "C" },
  { label: "五六-五七", master: "C" },
  { label: "五八-五九", master: "C" },
  { label: "六〇-六一", master: "C" },
  { label: "六二-六三", master: "C" },
  { label: "六四-六五", master: "C" },
  { label: "六六-六七", master: "B", art: [[1, 21, 13, 9, true], [1, 33, 7, 1, true], [15, 15, 7, 1, true], [14, 18, 10, 1, true], [15, 20, 13, 28], [32, 9, 3, 8], [42, 2, 13, 34], [42, 38, 8, 1, true], [42, 41, 13, 6], [56, 19, 12, 18], [56, 38, 10, 5]] },
  { label: "六八-六九", master: "B", art: [[2, 19, 12, 19], [2, 39, 8, 1, true], [2, 42, 11, 5], [15, 2, 13, 36], [15, 39, 7, 1, true], [15, 43, 13, 4], [42, 2, 13, 17], [42, 23, 12, 5], [42, 30, 13, 13], [42, 44, 12, 3], [56, 19, 12, 18], [56, 39, 12, 9, true]] },
  { label: "七〇-七一", master: "B", art: [[2, 19, 12, 20], [2, 41, 12, 6], [15, 2, 13, 5], [15, 9, 13, 23], [15, 35, 12, 4], [15, 42, 8, 1, true], [15, 45, 12, 2], [42, 2, 13, 29], [42, 33, 13, 14], [56, 19, 12, 9], [56, 30, 6, 2, true], [56, 33, 12, 14]] },
  { label: "七二-七三", master: "B", art: [[2, 18, 10, 2], [2, 22, 12, 25], [15, 2, 10, 2], [15, 6, 13, 42], [42, 2, 13, 21], [42, 26, 13, 21], [56, 19, 12, 14], [56, 36, 12, 11]] },
  { label: "七四-七五", master: "B", art: [[2, 20, 11, 16], [2, 38, 3, 5, true], [2, 40, 11, 2], [2, 43, 11, 4], [15, 2, 11, 10], [15, 14, 11, 14], [14, 30, 12, 13, true]] },
  { label: "七六-七七", master: "B", on: true, art: [[1, 21, 13, 9, true], [1, 31, 8, 2, true], [14, 10, 3, 2, true], [14, 17, 12, 3, true], [16, 22, 11, 16], [16, 40, 11, 8], [32, 9, 3, 8], [44, 2, 11, 23], [44, 27, 11, 14], [44, 43, 11, 4], [56, 22, 9, 1, true], [58, 24, 10, 19], [58, 45, 10, 2]] },
  { label: "七八-七九", master: "B", art: [[3, 19, 11, 10], [42, 2, 8, 1, true], [42, 5, 4, 13, true], [47, 5, 3, 13, true], [51, 5, 5, 13, true], [44, 21, 11, 10]] },
];

function Thumb({ master, art, on }: { master: string; art?: Mini[]; on?: boolean }) {
  const letter = `absolute top-0.5 px-px text-[18px] leading-[18px] text-black ${art ? "bg-white" : ""}`;
  return (
    <span className="relative block h-[65px] w-[70px]">
      <Svg w={70} h={65}>
        <defs>
          <pattern id="miniLines" width="4" height="2" patternUnits="userSpaceOnUse"><path d="M0 0h4v2H0z" fill="#979797" /><path d="M0 .5h4" stroke="#4c4c4c" /></pattern>
          <pattern id="miniBlue" width="4" height="2" patternUnits="userSpaceOnUse"><path d="M0 0h4v2H0z" fill="#5a8abf" /><path d="M0 .5h4" stroke="#3d6aa0" /></pattern>
        </defs>
        <rect x=".5" y="8.500" width="69" height="49" fill={on ? "#97c3f3" : "#fff"} stroke="#d0d0d0" />
        {art && <path d="M31 9h7v48h-7z" fill={on ? "#6aaee0" : "#b4dfdd"} />}
        {art?.map(([x, y, w, h, accent], i) => (
          <rect key={i} x={x} y={y + 8} width={w} height={h} fill={accent ? (on ? "#69ace4" : "#86cbc8") : on ? "url(#miniBlue)" : "url(#miniLines)"} />
        ))}
        <path d="M34.500 0v65" stroke="#c9c9c9" strokeWidth="1.200" />
      </Svg>
      <span className={`${letter} left-px mt-2`}>{master}</span>
      <span className={`${letter} right-px mt-2`}>{master}</span>
    </span>
  );
}

function PagesPanel() {
  return (
    <section aria-label="页面" className="flex w-[352px] shrink-0 flex-col">
      <div className="flex h-[17px] shrink-0 items-center justify-end border-b border-[#383838] bg-[#424242] pr-2"><Double dir="right" /></div>
      <div role="tablist" className="flex h-[38px] shrink-0 bg-[#424242] text-[16px] text-[#b9b9b9]">
        <button role="tab" className="w-[67px] border-r border-b border-[#383838] pb-1">属性</button>
        <button role="tab" aria-selected className="flex w-[74px] items-center justify-center gap-1.5 bg-[#535353] pb-1 font-medium text-white"><SortMark />页面</button>
        <button role="tab" className="w-[127px] border-r border-b border-[#383838] pb-1">CC Libraries</button>
        <div className="flex flex-1 items-center justify-end border-b border-[#383838] pr-2"><Menu /></div>
      </div>
      <div className="flex h-[90px] shrink-0 border-b-4 border-[#5f5f5f]">
        <ul className="flex-1 pt-0.5 pr-3 pl-[5px] text-[18px] text-white">
          <li className="flex h-[41px] items-center justify-between">
            <span className="pb-1">[无]</span>
            <span className="h-[33px] w-6 bg-white" />
          </li>
          <li className="flex h-[41px] items-center justify-between">
            <span className="pb-1">A-主页</span>
            <span className="flex h-[33px] w-12 bg-white"><span className="w-6 border-r border-[#b5b5b5]" /></span>
          </li>
        </ul>
        <div className="flex w-[18px] flex-col items-center bg-[#4b4b4b] py-1 text-[#a8a8a8]">
          <Chevron dir="up" />
          <span className="mt-1 h-[35px] w-[15px] rounded-full bg-[#676767]" />
          <Chevron className="mt-auto" />
        </div>
      </div>
      <div className="flex min-h-0 flex-1">
        <div className="flex-1 overflow-hidden">
          <div className="flex h-[1165px] flex-col pt-[3px] pl-[132px]">
            {pages.map((p) => (
              <button key={p.label} className="flex w-[70px] flex-1 flex-col items-center text-white">
                <Thumb {...p} />
                <span className={`ml-[-4px] px-1.5 text-[18px] leading-[22px] whitespace-nowrap ${p.on ? "bg-[#2f86ea]" : ""}`}>{p.label}</span>
              </button>
            ))}
          </div>
        </div>
        <div className="flex w-[18px] flex-col items-center bg-[#4b4b4b] py-1 text-[#a8a8a8]">
          <Chevron dir="up" />
          <span className="mt-1 h-[262px] w-[15px] rounded-full bg-[#676767]" />
          <Chevron className="mt-auto" />
        </div>
      </div>
      <div className="flex h-[35px] shrink-0 items-center border-t border-[#494949] pt-0.5 pr-[34px] pl-2 text-[18px] text-white">
        <span className="flex-1">100 页，51 个跨页</span>
        <IconButton label="编辑页面大小">
          <Svg w={25} h={16}>
            <path d="M6 5V1h7l4 4v9h-4M1 6h10v8H1zM9 6l4 4" stroke="#c3c3c3" strokeWidth="1.500" />
            <path d="M20 12h5l-2.500 3z" fill="#c3c3c3" />
          </Svg>
        </IconButton>
        <IconButton label="新建页面" className="ml-5"><NewIcon /></IconButton>
        <IconButton label="删除页面" className="ml-5"><TrashIcon /></IconButton>
      </div>
    </section>
  );
}

function Dock() {
  return (
    <aside aria-label="折叠面板" className="flex w-[55px] shrink-0 flex-col border-r-[5px] border-[#3d3d3d]">
      <div className="flex h-[17px] items-center justify-end border-b border-[#383838] bg-[#424242] pr-[5px]"><Double dir="left" /></div>
      <div className="flex flex-col items-center border-b-2 border-[#3d3d3d] pt-[5px] pb-3.5 pl-[3px]">
        <Grip />
        <IconButton label="图层面板" className="mt-1.5 h-8 w-[38px] rounded border-2 border-[#606060] bg-[#2d2d2d]">
          <Svg w={24} h={25}>
            <path d="M12 0l12 8-12 8L0 8z" fill="#cdcdcd" />
            <path d="M2 14l10 7 10-7 2 2-12 9L0 16z" fill="#cdcdcd" />
          </Svg>
        </IconButton>
        <IconButton label="链接面板" className="mt-4">
          <Svg w={28} h={14}>
            <path d="M13 12H7A5 5 0 0 1 7 2h5a5 5 0 0 1 4 8" stroke="#c6c6c6" strokeWidth="2.500" />
            <path d="M15 2h6a5 5 0 0 1 0 10h-5a5 5 0 0 1-4-8" stroke="#c6c6c6" strokeWidth="2.500" />
          </Svg>
        </IconButton>
      </div>
    </aside>
  );
}

export default function App() {
  return (
    <div className="flex h-screen flex-col overflow-hidden border-b-[3px] border-l-[3px] border-[#333] bg-[#535353] font-['Inter','Noto_Sans_CJK_SC',sans-serif] leading-tight">
      <TitleBar />
      <ControlBar />
      <main className="flex min-h-0 flex-1">
        <ToolStrip />
        <section aria-label="文档窗口" className="relative flex min-w-0 flex-1 flex-col border-r-[3px] border-[#3d3d3d]">
          <DocTabs />
          <TopRuler />
          <div className="flex min-h-0 flex-1">
            <SideRuler />
            <div className="flex min-w-0 flex-1 flex-col items-center gap-[70px] overflow-hidden bg-[#b9b9b9] pr-0.5">
              <div className="-mt-[72px]"><Spread index={0} /></div>
              <Spread index={1} />
              <Spread index={2} />
              <Spread index={3} />
            </div>
            <div className="flex w-[21px] shrink-0 flex-col items-center bg-[#4b4b4b] pb-1 text-[#a8a8a8]">
              <div className="flex-1" />
              <span className="mb-[124px] h-[83px] w-[19px] rounded-full bg-[#6a6a6a]" />
              <Chevron />
            </div>
          </div>
          <StatusBar />
          <LayersPanel />
        </section>
        <Dock />
        <PagesPanel />
      </main>
    </div>
  );
}
